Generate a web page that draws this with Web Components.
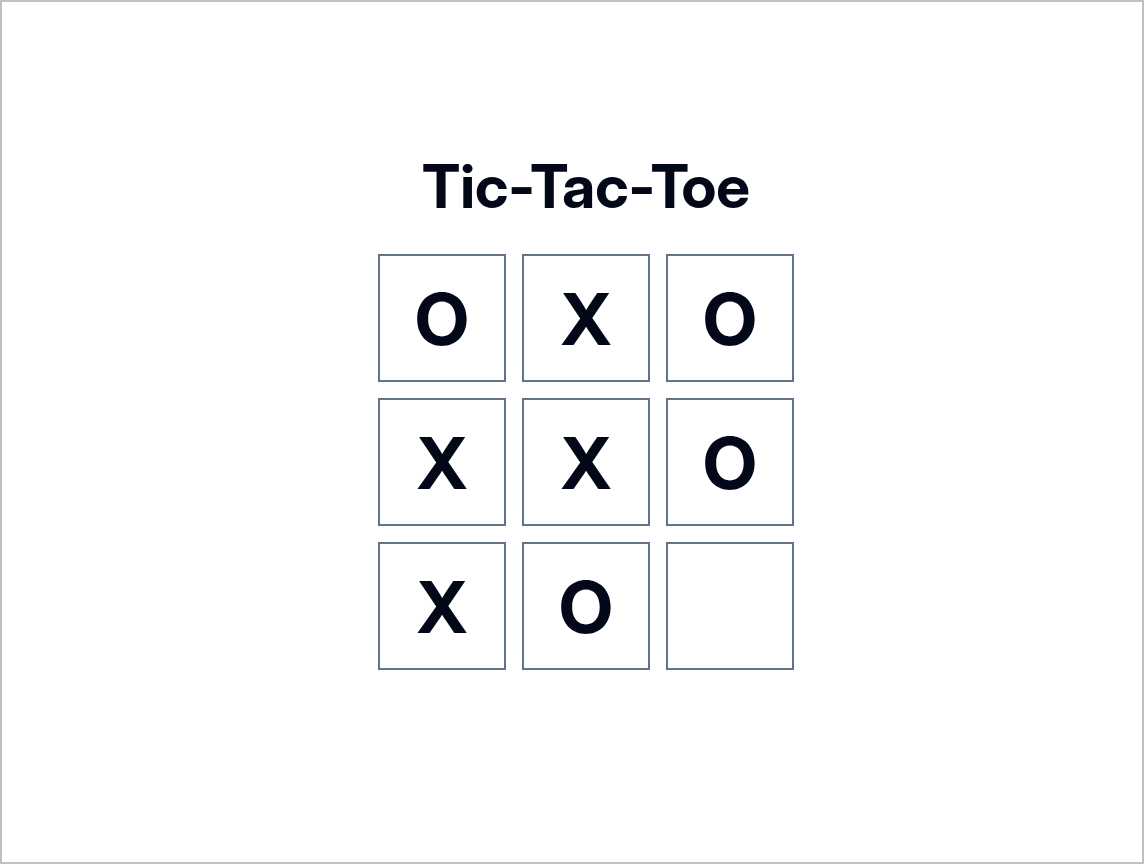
<!DOCTYPE html>
<html lang="en">
<head>
<meta charset="utf-8">
<title>Tic-Tac-Toe</title>
<style>
html, body { margin: 0; background: #fff; }
body { font-family: "Inter Display", Inter, "Liberation Sans", sans-serif; color: #020817; }
</style>
</head>
<body>
<game-page><tic-tac-toe cells="OXOXXOXO "></tic-tac-toe></game-page>
<script>
class GamePage extends HTMLElement {
  constructor() {
    super();
    this.attachShadow({ mode: "open" }).innerHTML = `
      <style>
        :host { display: grid; min-height: 100vh; box-sizing: border-box; border: 2px solid #c0c0c0; }
        main { display: grid; place-items: center; padding: 0 0 44px 28px; }
      </style>
      <main><slot></slot></main>`;
  }
}
customElements.define("game-page", GamePage);

class GameSquare extends HTMLElement {
  constructor() {
    super();
    this.attachShadow({ mode: "open" }).innerHTML = `
      <style>
        :host { display: block; }
        button {
          display: grid; place-items: center; box-sizing: border-box;
          width: 128px; height: 128px; margin: 0; padding: 2px 0 0;
          border: 2px solid #64748b; border-radius: 0; background: #fff; color: inherit;
          font: 700 72px/72px "Inter Display", Inter, "Liberation Sans", sans-serif; cursor: pointer;
        }
      </style>
      <button type="button"><slot></slot></button>`;
  }
  connectedCallback() {
    const mark = this.textContent.trim();
    this.shadowRoot.querySelector("button").setAttribute("aria-label", mark || "Empty square");
  }
}
customElements.define("game-square", GameSquare);

class TicTacToe extends HTMLElement {
  constructor() {
    super();
    this.attachShadow({ mode: "open" });
  }
  connectedCallback() {
    const cells = [...this.getAttribute("cells")];
    this.shadowRoot.innerHTML = `
      <style>
        :host { display: flex; flex-direction: column; align-items: center; gap: 32px; }
        h1 { margin: 0; font-size: 60px; line-height: 72px; font-weight: 700; }
        .board { display: grid; grid-template-columns: repeat(3, auto); gap: 16px; }
      </style>
      <h1>Tic-Tac-Toe</h1>
      <div class="board">${cells.map(c => `<game-square>${c.trim()}</game-square>`).join("")}</div>`;
  }
}
customElements.define("tic-tac-toe", TicTacToe);
</script>
</body>
</html>
